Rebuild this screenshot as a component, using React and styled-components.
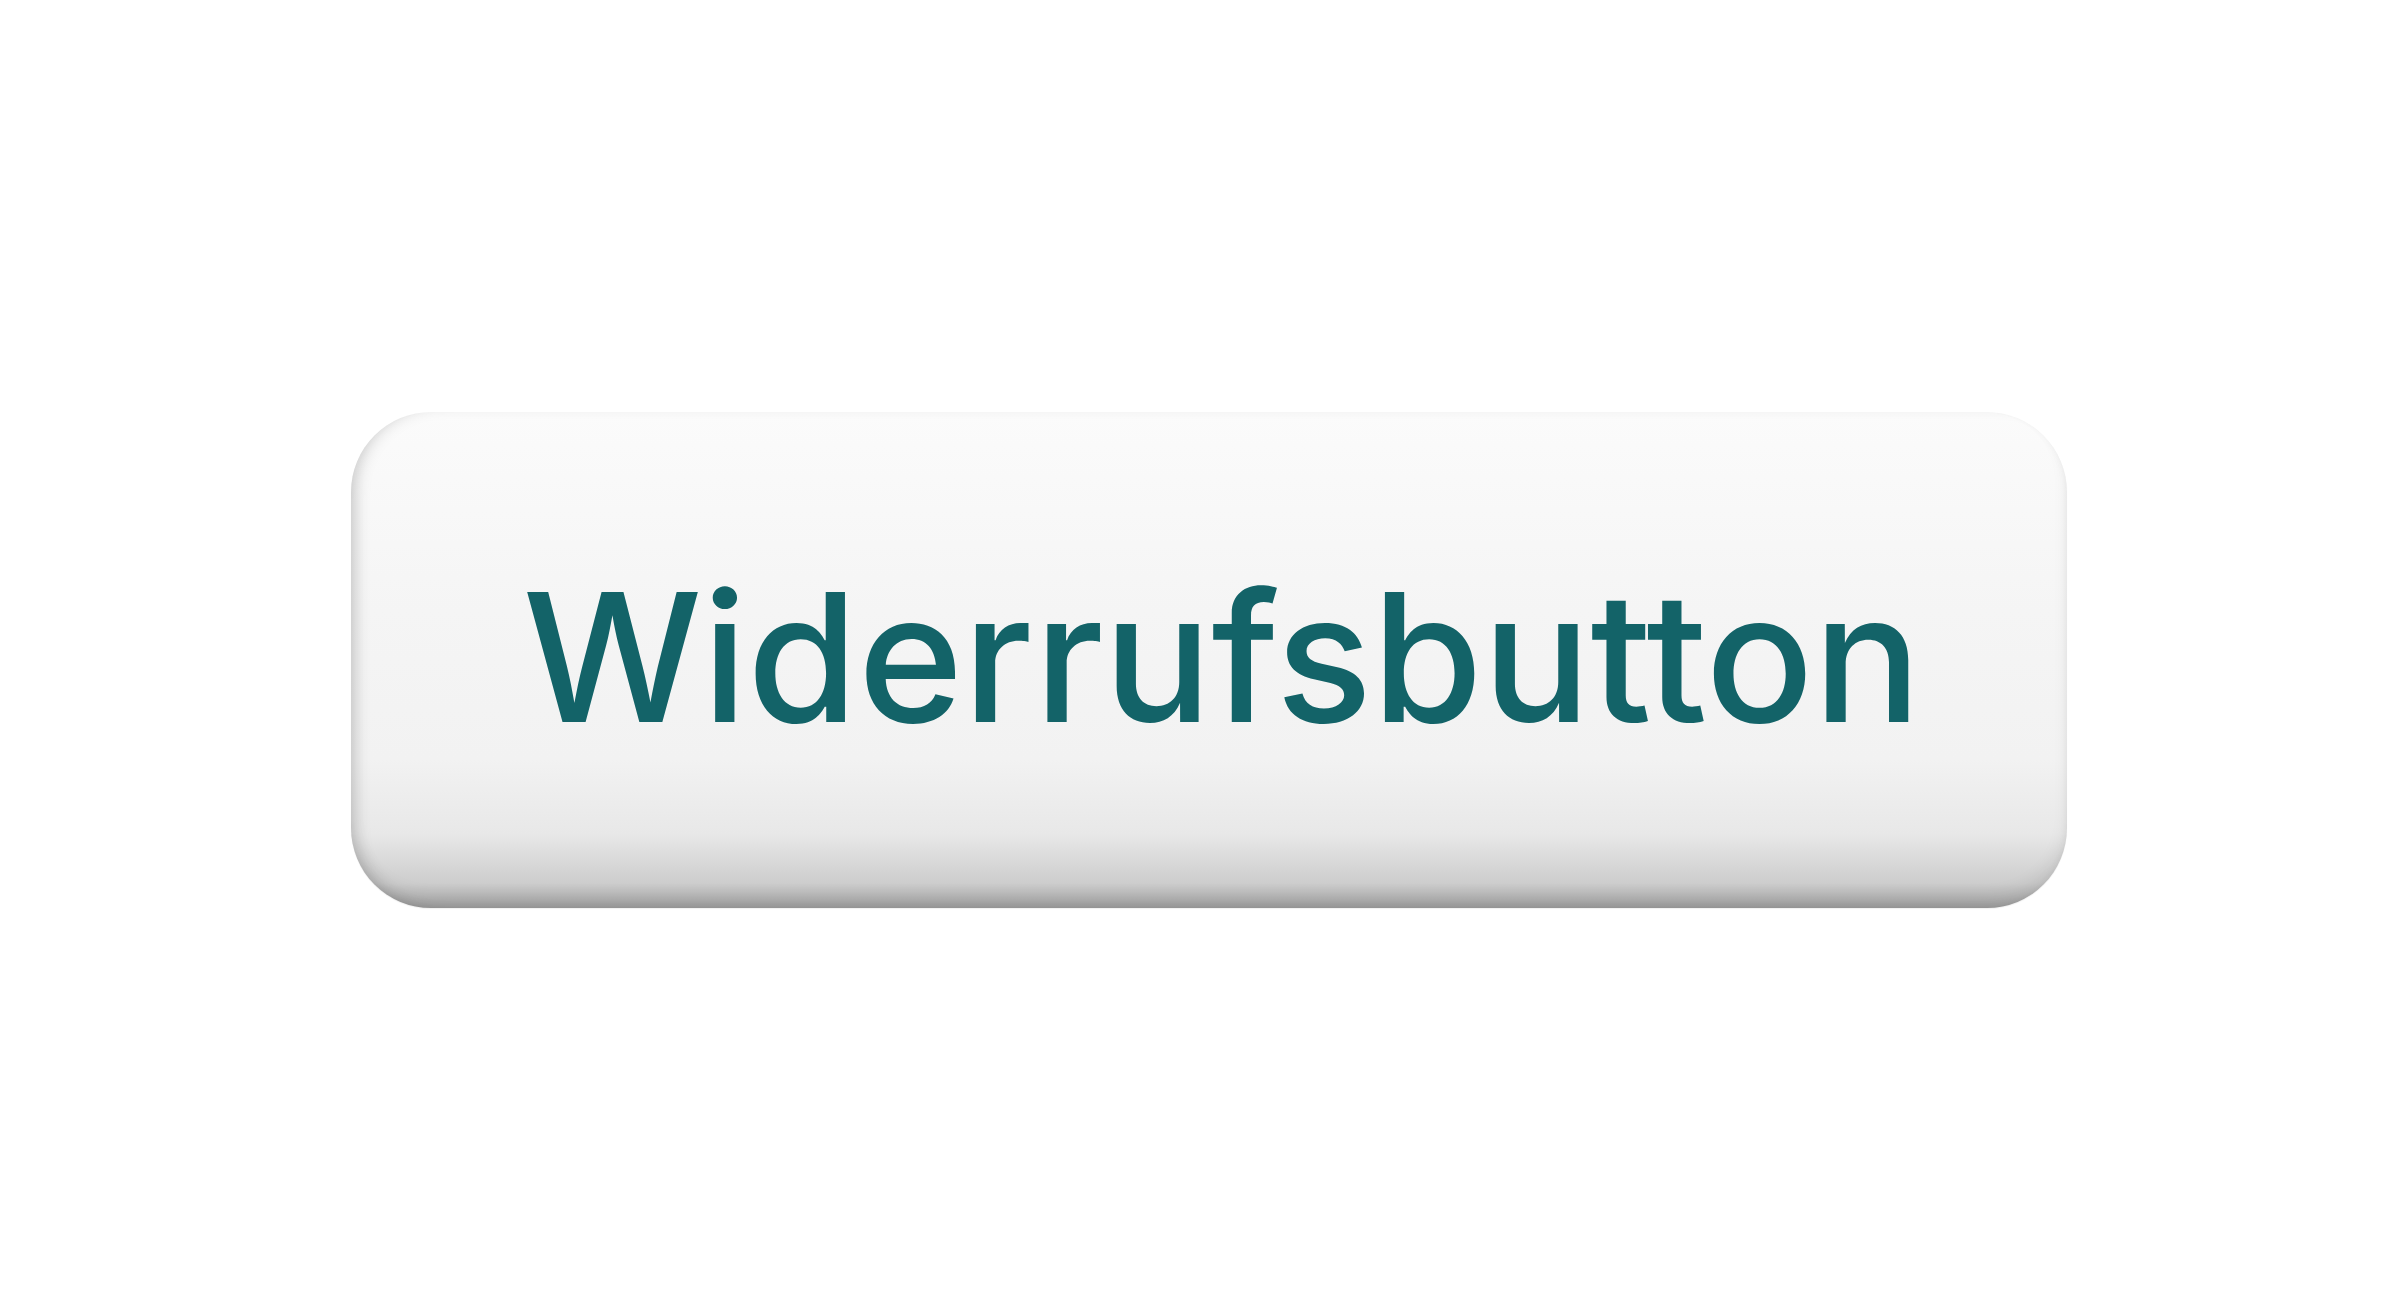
import React from 'react';
import styled, { createGlobalStyle } from 'styled-components';

const GlobalStyle = createGlobalStyle`
  html, body {
    margin: 0;
    padding: 0;
    background: #ffffff;
  }
  body {
    font-family: Inter, 'Liberation Sans', Arial, sans-serif;
  }
`;

const Stage = styled.div`
  width: 2400px;
  height: 1308px;
  box-sizing: border-box;
  padding: 412px 0 0 351px;
  background: #ffffff;
`;

const KeyButton = styled.button`
  width: 1716px;
  height: 496px;
  border: none;
  border-radius: 80px;
  display: flex;
  align-items: center;
  justify-content: center;
  padding: 0 0 0 26px;
  box-sizing: border-box;
  cursor: pointer;
  background: linear-gradient(
    to bottom,
    #fbfbfb 0%,
    #f5f5f5 40%,
    #f2f2f2 70%,
    #e8e8e8 85%,
    #cdcdcd 95%,
    #a6a6a6 100%
  );
  box-shadow:
    inset 12px 0 16px -8px rgba(0, 0, 0, 0.17),
    inset -6px 0 10px -8px rgba(0, 0, 0, 0.08),
    inset 0 -12px 20px -6px rgba(0, 0, 0, 0.12),
    0 1px 1px rgba(0, 0, 0, 0.06);
`;

const Label = styled.span`
  font-family: Inter, 'Liberation Sans', Arial, sans-serif;
  font-size: 179px;
  font-weight: 500;
  letter-spacing: 0;
  line-height: 1;
  color: #136368;
  margin-bottom: 6px;
`;

export default function App() {
  return (
    <>
      <GlobalStyle />
      <Stage>
        <KeyButton type="button">
          <Label>Widerrufsbutton</Label>
        </KeyButton>
      </Stage>
    </>
  );
}
